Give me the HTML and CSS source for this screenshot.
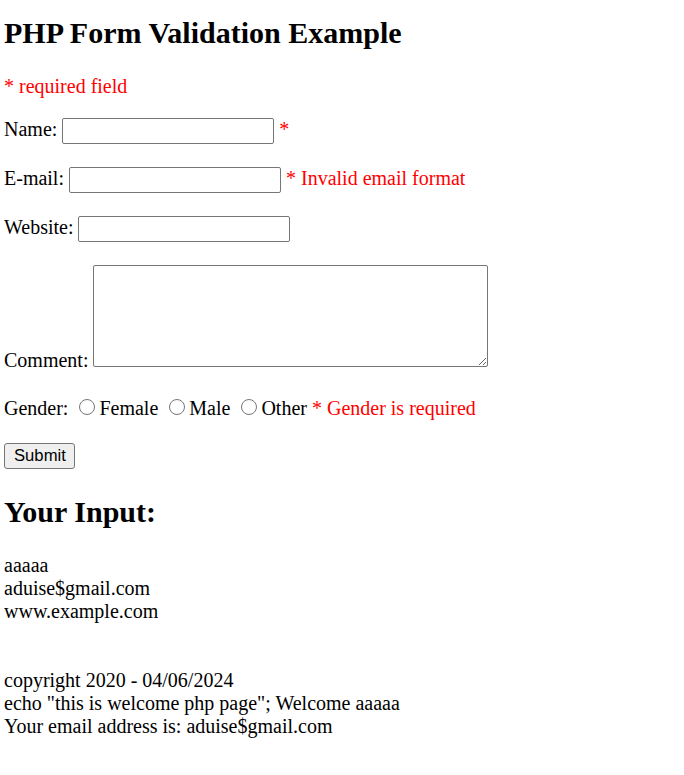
FILE: index.html
```html
<!DOCTYPE html>
<html>
<head>
<meta charset="utf-8">
<title>PHP Form Validation Example</title>
<link rel="stylesheet" href="styles.css">
</head>
<body class="page">
<h2 class="title">PHP Form Validation Example</h2>
<p class="note"><span class="error">* required field</span></p>
<form class="form">
Name: <input class="field" type="text" name="name"> <span class="error">* </span><br><br>
E-mail: <input class="field" type="text" name="email"> <span class="error">* Invalid email format</span><br><br>
Website: <input class="field" type="text" name="website"> <span class="error"></span><br><br>
Comment: <textarea class="comment" name="comment"></textarea><br><br>
Gender:
<input class="radio" type="radio" name="gender" value="female">Female
<input class="radio" type="radio" name="gender" value="male">Male
<input class="radio" type="radio" name="gender" value="other">Other
<span class="error">* Gender is required</span><br><br>
<input class="submit" type="submit" name="submit" value="Submit">
</form>
<h2 class="title">Your Input:</h2>
<div class="output">aaaaa<br>aduise$gmail.com<br>www.example.com<br><br><br>copyright 2020 - 04/06/2024<br>echo "this is welcome php page"; Welcome aaaaa<br>Your email address is: aduise$gmail.com</div>
</body>
</html>
```
FILE: styles.css
```css
html {
  background: #fff;
}
.page {
  margin: 0 4px;
  font-family: "Liberation Serif", "Times New Roman", serif;
  font-size: 20px;
  color: #000;
}
.title {
  font-size: 30px;
  font-weight: bold;
  margin: 16px 0 25px;
}
.note {
  margin: 0 0 20px;
}
.error {
  color: #ff0000;
}
.form {
  margin: 0 0 26px;
}
.field {
  box-sizing: border-box;
  width: 212px;
  height: 26px;
  margin: 0;
  padding: 1px 2px;
  border: 1px solid #767676;
  border-radius: 2px;
  font-family: "Liberation Sans", Arial, sans-serif;
  font-size: 16.67px;
  background: #fff;
}
.comment {
  box-sizing: border-box;
  width: 395px;
  height: 102px;
  margin: 0;
  padding: 2px;
  border: 1px solid #767676;
  border-radius: 2px;
  font-family: "Liberation Mono", monospace;
  font-size: 16.67px;
  vertical-align: baseline;
}
.radio {
  width: 16px;
  height: 16px;
  margin: 4px 4px 0 6px;
  vertical-align: baseline;
}
.submit {
  box-sizing: border-box;
  height: 26px;
  margin: 0;
  padding: 1px 8px 1px 9px;
  border: 1px solid #767676;
  border-radius: 3px;
  background: #efefef;
  font-family: "Liberation Sans", Arial, sans-serif;
  font-size: 16.67px;
  color: #000;
}
.output {
  margin: 0;
}
```
